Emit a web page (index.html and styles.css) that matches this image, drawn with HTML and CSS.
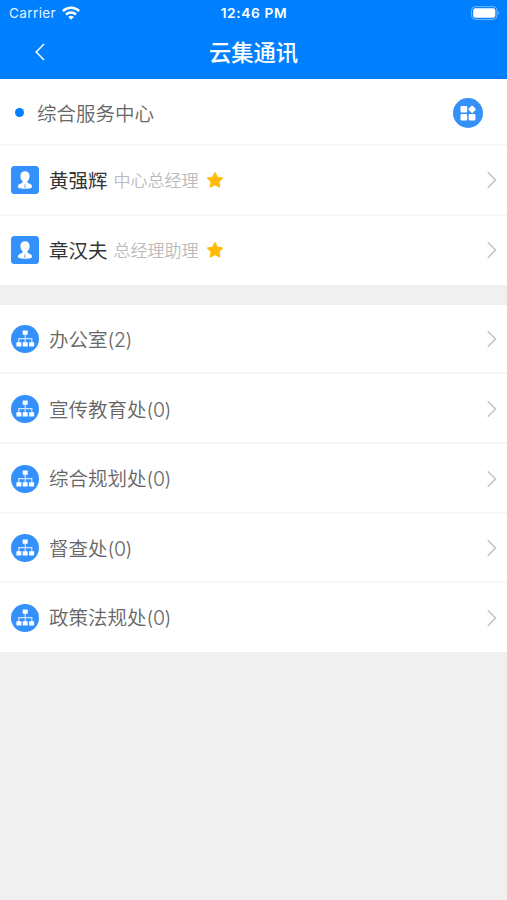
FILE: index.html
```html
<!DOCTYPE html>
<html lang="zh-CN">
<head>
<meta charset="utf-8">
<title>云集通讯</title>
<link rel="stylesheet" href="styles.css">
</head>
<body>
<svg class="defs" aria-hidden="true">
  <symbol id="person" viewBox="0 0 28 28">
    <rect width="28" height="28" rx="3.5" fill="#3490fa"/>
    <path fill="#fff" d="M14 5.300c2.800 0 4.600 1.800 4.600 4.700 0 2.200-.8 4-2.100 5.100v1.700c1.300.8 4.600 1.400 4.600 3.700 0 1.500-2 2.200-7.100 2.200s-7.100-.7-7.100-2.200c0-2.300 3.300-2.900 4.600-3.700v-1.700c-1.300-1.100-2.100-2.900-2.100-5.100 0-2.900 1.800-4.700 4.600-4.700z"/>
    <path fill="#3490fa" opacity=".8" d="M13.500 17.800h1l-.2 1.100.4 2.400-.7.700-.7-.7.400-2.400z"/>
  </symbol>
  <symbol id="org" viewBox="0 0 28 28">
    <circle cx="14" cy="14" r="14" fill="#3490fa"/>
    <path fill="none" stroke="#cfe4ff" stroke-width="1.200" d="M14.200 9v9M7.800 18.500v-4.900h13v4.900"/>
    <path fill="#fff" d="M11.700 5.500h5v4.300h-5zM5.400 17.300h5v4.200h-5zM11.700 17.300h5v4.200h-5zM18.100 17.300h5v4.200h-5z"/>
  </symbol>
  <symbol id="star" viewBox="0 0 18 18">
    <path fill="#ffbb05" stroke="#ffbb05" stroke-width="1" stroke-linejoin="round" d="M9 1.300l2.400 4.900 5.400.8-3.900 3.800.9 5.400L9 13.700l-4.800 2.500.9-5.400L1.200 7l5.400-.8z"/>
  </symbol>
  <symbol id="arrow" viewBox="0 0 10 18">
    <path fill="none" stroke="#c5c5c5" stroke-width="1.600" d="M.8 1.300L8.500 9 .8 16.700"/>
  </symbol>
</svg>
<header class="top">
  <div class="status">
    <div class="carrier">
      <span>Carrier</span>
      <svg class="wifi" viewBox="0 0 18 14">
        <g fill="none" stroke="#fff" stroke-width="2.500">
          <path d="M.9 5.100a11.700 11.700 0 0 1 16.200 0"/>
          <path d="M4 8.500a7.200 7.200 0 0 1 10 0"/>
        </g>
        <path fill="#fff" d="M9 13.700l-2.800-2.700a4.200 4.200 0 0 1 5.600 0z"/>
      </svg>
    </div>
    <div class="time">12:46 PM</div>
    <svg class="battery" viewBox="0 0 30 14">
      <rect x=".6" y=".6" width="25.300" height="12.800" rx="3.600" fill="none" stroke="#73b8ff"/>
      <rect x="2.200" y="2.300" width="22.100" height="9.400" rx="2.200" fill="#fff"/>
      <path d="M27.200 5c1.500.5 1.500 3.500 0 4z" fill="#73b8ff"/>
    </svg>
  </div>
  <div class="nav">
    <svg class="back" viewBox="0 0 10 18"><path fill="none" stroke="#fff" stroke-width="1.500" d="M9 1L1.200 9 9 17"/></svg>
    <h1 class="title">云集通讯</h1>
  </div>
</header>
<main>
  <section class="group">
    <div class="row center">
      <span class="dot"></span>
      <span class="label">综合服务中心</span>
      <svg class="apps" viewBox="0 0 30 30">
        <circle cx="15" cy="15" r="15" fill="#3490fa"/>
        <g fill="#fff">
          <rect x="7.500" y="8" width="6.700" height="6.500" rx="1"/>
          <rect x="7.500" y="16" width="6.700" height="6.500" rx="1"/>
          <rect x="15.700" y="16" width="6.700" height="6.500" rx="1"/>
          <rect x="16.200" y="8.400" width="5.800" height="5.800" rx="1.300" transform="rotate(45 19.100 11.300)"/>
        </g>
      </svg>
    </div>
    <div class="row">
      <svg class="icon"><use href="#person"/></svg>
      <span class="name">黄强辉</span><span class="role">中心总经理</span>
      <svg class="star"><use href="#star"/></svg>
      <svg class="arrow"><use href="#arrow"/></svg>
    </div>
    <div class="row">
      <svg class="icon"><use href="#person"/></svg>
      <span class="name">章汉夫</span><span class="role">总经理助理</span>
      <svg class="star"><use href="#star"/></svg>
      <svg class="arrow"><use href="#arrow"/></svg>
    </div>
  </section>
  <section class="group departments">
    <div class="row">
      <svg class="icon"><use href="#org"/></svg>
      <span class="label">办公室<span class="count">(2)</span></span>
      <svg class="arrow"><use href="#arrow"/></svg>
    </div>
    <div class="row">
      <svg class="icon"><use href="#org"/></svg>
      <span class="label">宣传教育处<span class="count">(0)</span></span>
      <svg class="arrow"><use href="#arrow"/></svg>
    </div>
    <div class="row">
      <svg class="icon"><use href="#org"/></svg>
      <span class="label">综合规划处<span class="count">(0)</span></span>
      <svg class="arrow"><use href="#arrow"/></svg>
    </div>
    <div class="row">
      <svg class="icon"><use href="#org"/></svg>
      <span class="label">督查处<span class="count">(0)</span></span>
      <svg class="arrow"><use href="#arrow"/></svg>
    </div>
    <div class="row">
      <svg class="icon"><use href="#org"/></svg>
      <span class="label">政策法规处<span class="count">(0)</span></span>
      <svg class="arrow"><use href="#arrow"/></svg>
    </div>
  </section>
</main>
</body>
</html>
```
FILE: styles.css
```css
* {
  box-sizing: border-box;
}

body {
  margin: 0;
  min-height: 100vh;
  background: #f0f0f0;
  font-family: "Noto Sans CJK SC", sans-serif;
}

.defs {
  display: none;
}

svg {
  display: block;
  flex: none;
}

.top {
  height: 79.3px;
  background: #0080ff;
  color: #fff;
}

.status {
  display: grid;
  grid-template-columns: 1fr auto 1fr;
  align-items: center;
  height: 27px;
  padding: 0 6px 0 9px;
  font: 13.5px/27px Inter, sans-serif;
}

.carrier {
  display: flex;
  align-items: center;
  gap: 6px;
  letter-spacing: 0.4px;
}

.carrier span {
  opacity: 0.9;
}

.wifi {
  width: 18px;
  height: 14px;
  margin-top: -1px;
}

.time {
  margin-right: 2px;
  font-size: 13.7px;
  font-weight: 600;
  letter-spacing: 0.65px;
}

.battery {
  width: 30px;
  height: 14px;
  margin-top: -1px;
  justify-self: end;
}

.nav {
  display: grid;
  grid-template-columns: 1fr auto 1fr;
  align-items: center;
  height: 50px;
}

.back {
  width: 10px;
  height: 18px;
  margin-left: 35px;
}

.title {
  margin: 0 0 1px;
  font-size: 22.3px;
  font-weight: 500;
  line-height: 47px;
}

.group {
  background: #fff;
}

.group + .group {
  margin-top: 20px;
}

.row {
  display: flex;
  align-items: center;
  height: 69.6px;
  padding: 0 10px 0 11px;
  border-bottom: 2px solid #f6f6f6;
  color: #666;
  font-size: 19.5px;
  line-height: 30px;
}

.row:last-child {
  height: 68.7px;
  border-bottom: 0;
}

.departments .row {
  padding-top: 1.8px;
}

.departments .row:last-child {
  height: 69px;
  padding-top: 0.6px;
}

.center {
  height: 67.2px;
  padding: 1.8px 24px 0 15px;
}

.label {
  font-weight: 350;
}

.count {
  font-family: Inter, sans-serif;
  font-weight: 300;
  letter-spacing: -0.4px;
}

.dot {
  width: 9px;
  height: 9px;
  margin-right: 13px;
  border-radius: 50%;
  background: #0080ff;
}

.apps {
  width: 30px;
  height: 30px;
  margin-left: auto;
}

.icon {
  width: 28px;
  height: 28px;
  margin-right: 10px;
}

.name {
  color: #333;
}

.role {
  margin-left: 6px;
  color: #bbb;
  font-size: 17px;
  font-weight: 350;
}

.star {
  width: 18px;
  height: 18px;
  margin-left: 7.5px;
}

.arrow {
  width: 10px;
  height: 18px;
  margin-left: auto;
}
```
